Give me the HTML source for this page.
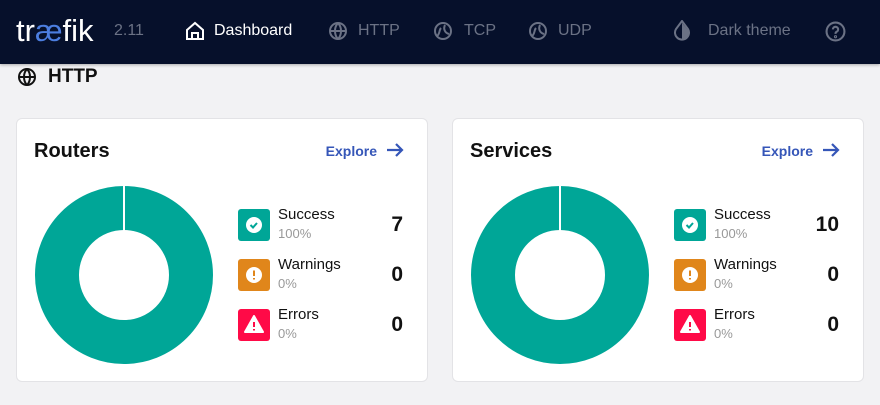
<!DOCTYPE html>
<html><head><style>
body{margin:0;width:880px;height:405px;background:#f2f2f4;font-family:"Liberation Sans",sans-serif;position:relative;overflow:hidden}
.nav{position:absolute;left:0;top:0;width:880px;height:64px;background:#06102b;box-shadow:0 1px 3px rgba(0,0,0,.3)}
.t{position:absolute;font-size:16px;color:#6b7285;top:22px}
.card{position:absolute;top:118px;width:410px;height:262px;background:#fff;border:1px solid #e3e3e6;border-radius:6px}
.h{position:absolute;left:17px;top:21px;font-size:20px;font-weight:bold;color:#111}
.ex{position:absolute;right:50px;top:24px;font-size:14px;font-weight:bold;color:#3556b8}
.ar{position:absolute;right:23px;top:23px}
.ic{position:absolute;left:221px;width:32px;height:32px;border-radius:3px}
.lb{position:absolute;left:261px;font-size:15px;color:#111}
.pc{position:absolute;left:261px;font-size:13px;color:#999}
.n{position:absolute;right:24px;font-size:21px;font-weight:bold;color:#111}
</style></head><body>
<div class="nav">
<div style="position:absolute;left:16px;top:13px;font-size:31px;color:#fff">tr<span style="color:#4c7ee0">æ</span>fik</div>
<div class="t" style="left:114px;color:#6b7285">2.11</div>
<svg style="position:absolute;left:185px;top:21px" width="20" height="20" viewBox="0 0 20 20" fill="none" stroke="#fff" stroke-width="2"><path d="M2 9L10 2l8 7v9H2z"/><path d="M7 18v-6h6v6"/></svg>
<div class="t" style="left:214px;color:#fff">Dashboard</div>
<svg style="position:absolute;left:328px;top:21px" width="20" height="20" viewBox="0 0 20 20" fill="none" stroke="#6b7285" stroke-width="2"><circle cx="10" cy="10" r="8"/><path d="M2 10h16M10 2c-4 4-4 12 0 16M10 2c4 4 4 12 0 16"/></svg>
<div class="t" style="left:358px">HTTP</div>
<svg style="position:absolute;left:433px;top:21px" width="20" height="20" viewBox="0 0 20 20" fill="none" stroke="#6b7285" stroke-width="2"><circle cx="10" cy="10" r="8"/><path d="M4 15c3-2 2-6 4-8M12 4c-2 4 0 8 4 9"/></svg>
<div class="t" style="left:464px">TCP</div>
<svg style="position:absolute;left:528px;top:21px" width="20" height="20" viewBox="0 0 20 20" fill="none" stroke="#6b7285" stroke-width="2"><circle cx="10" cy="10" r="8"/><path d="M4 15c3-2 2-6 4-8M12 4c-2 4 0 8 4 9"/></svg>
<div class="t" style="left:558px">UDP</div>
<svg style="position:absolute;left:672px;top:20px" width="20" height="22" viewBox="0 0 20 22"><path d="M10 1L4 9a7 7 0 1 0 12 0z" fill="none" stroke="#6b7285" stroke-width="2"/><path d="M10 3v16a6 6 0 0 0 5-10z" fill="#6b7285"/></svg>
<div class="t" style="left:708px">Dark theme</div>
<svg style="position:absolute;left:825px;top:21px" width="21" height="21" viewBox="0 0 20 20" fill="none" stroke="#6b7285" stroke-width="2"><circle cx="10" cy="10" r="8.5"/><path d="M7.5 8a2.5 2.5 0 1 1 3.5 2.3c-.8.4-1 1-1 2"/><circle cx="10" cy="15" r=".5"/></svg>
</div>
<svg style="position:absolute;left:17px;top:67px" width="20" height="20" viewBox="0 0 20 20" fill="none" stroke="#111" stroke-width="2"><circle cx="10" cy="10" r="8"/><path d="M2 10h16M10 2c-4 4-4 12 0 16M10 2c4 4 4 12 0 16"/></svg>
<div style="position:absolute;left:48px;top:66px;font-size:19px;font-weight:bold;color:#111">HTTP</div>

<div class="card" style="left:16px">
<div class="h">Routers</div>
<div class="ex">Explore</div>
<svg class="ar" width="18" height="16" viewBox="0 0 18 16" fill="none" stroke="#3556b8" stroke-width="2.2"><path d="M1 8h15M10 2l6 6-6 6"/></svg>
<svg style="position:absolute;left:17px;top:66px" width="180" height="180"><circle cx="90" cy="90" r="67" fill="none" stroke="#00a697" stroke-width="44"/><line x1="90" y1="1" x2="90" y2="46" stroke="#fff" stroke-width="2"/></svg>
<div class="ic" style="top:90px;background:#00a697"><svg width="32" height="32"><circle cx="16" cy="16" r="8" fill="#fff"/><path d="M12.5 16l2.5 2.5 4-4.5" fill="none" stroke="#00a697" stroke-width="2"/></svg></div>
<div class="lb" style="top:87px">Success</div><div class="pc" style="top:107px">100%</div><div class="n" style="top:94px">7</div>
<div class="ic" style="top:140px;background:#e0861b"><svg width="32" height="32"><circle cx="16" cy="16" r="8" fill="#fff"/><path d="M16 11.5v5.5M16 19v1.5" stroke="#e0861b" stroke-width="2"/></svg></div>
<div class="lb" style="top:137px">Warnings</div><div class="pc" style="top:157px">0%</div><div class="n" style="top:144px">0</div>
<div class="ic" style="top:190px;background:#ff0a47"><svg width="32" height="32"><path d="M16 7L25 23H7z" fill="#fff" stroke="#fff" stroke-linejoin="round" stroke-width="2"/><path d="M16 13v5M16 20v1.5" stroke="#ff0a47" stroke-width="2"/></svg></div>
<div class="lb" style="top:187px">Errors</div><div class="pc" style="top:207px">0%</div><div class="n" style="top:194px">0</div>
</div>

<div class="card" style="left:452px">
<div class="h">Services</div>
<div class="ex">Explore</div>
<svg class="ar" width="18" height="16" viewBox="0 0 18 16" fill="none" stroke="#3556b8" stroke-width="2.2"><path d="M1 8h15M10 2l6 6-6 6"/></svg>
<svg style="position:absolute;left:17px;top:66px" width="180" height="180"><circle cx="90" cy="90" r="67" fill="none" stroke="#00a697" stroke-width="44"/><line x1="90" y1="1" x2="90" y2="46" stroke="#fff" stroke-width="2"/></svg>
<div class="ic" style="top:90px;background:#00a697"><svg width="32" height="32"><circle cx="16" cy="16" r="8" fill="#fff"/><path d="M12.5 16l2.5 2.5 4-4.5" fill="none" stroke="#00a697" stroke-width="2"/></svg></div>
<div class="lb" style="top:87px">Success</div><div class="pc" style="top:107px">100%</div><div class="n" style="top:94px">10</div>
<div class="ic" style="top:140px;background:#e0861b"><svg width="32" height="32"><circle cx="16" cy="16" r="8" fill="#fff"/><path d="M16 11.5v5.5M16 19v1.5" stroke="#e0861b" stroke-width="2"/></svg></div>
<div class="lb" style="top:137px">Warnings</div><div class="pc" style="top:157px">0%</div><div class="n" style="top:144px">0</div>
<div class="ic" style="top:190px;background:#ff0a47"><svg width="32" height="32"><path d="M16 7L25 23H7z" fill="#fff" stroke="#fff" stroke-linejoin="round" stroke-width="2"/><path d="M16 13v5M16 20v1.5" stroke="#ff0a47" stroke-width="2"/></svg></div>
<div class="lb" style="top:187px">Errors</div><div class="pc" style="top:207px">0%</div><div class="n" style="top:194px">0</div>
</div>
</body></html>
